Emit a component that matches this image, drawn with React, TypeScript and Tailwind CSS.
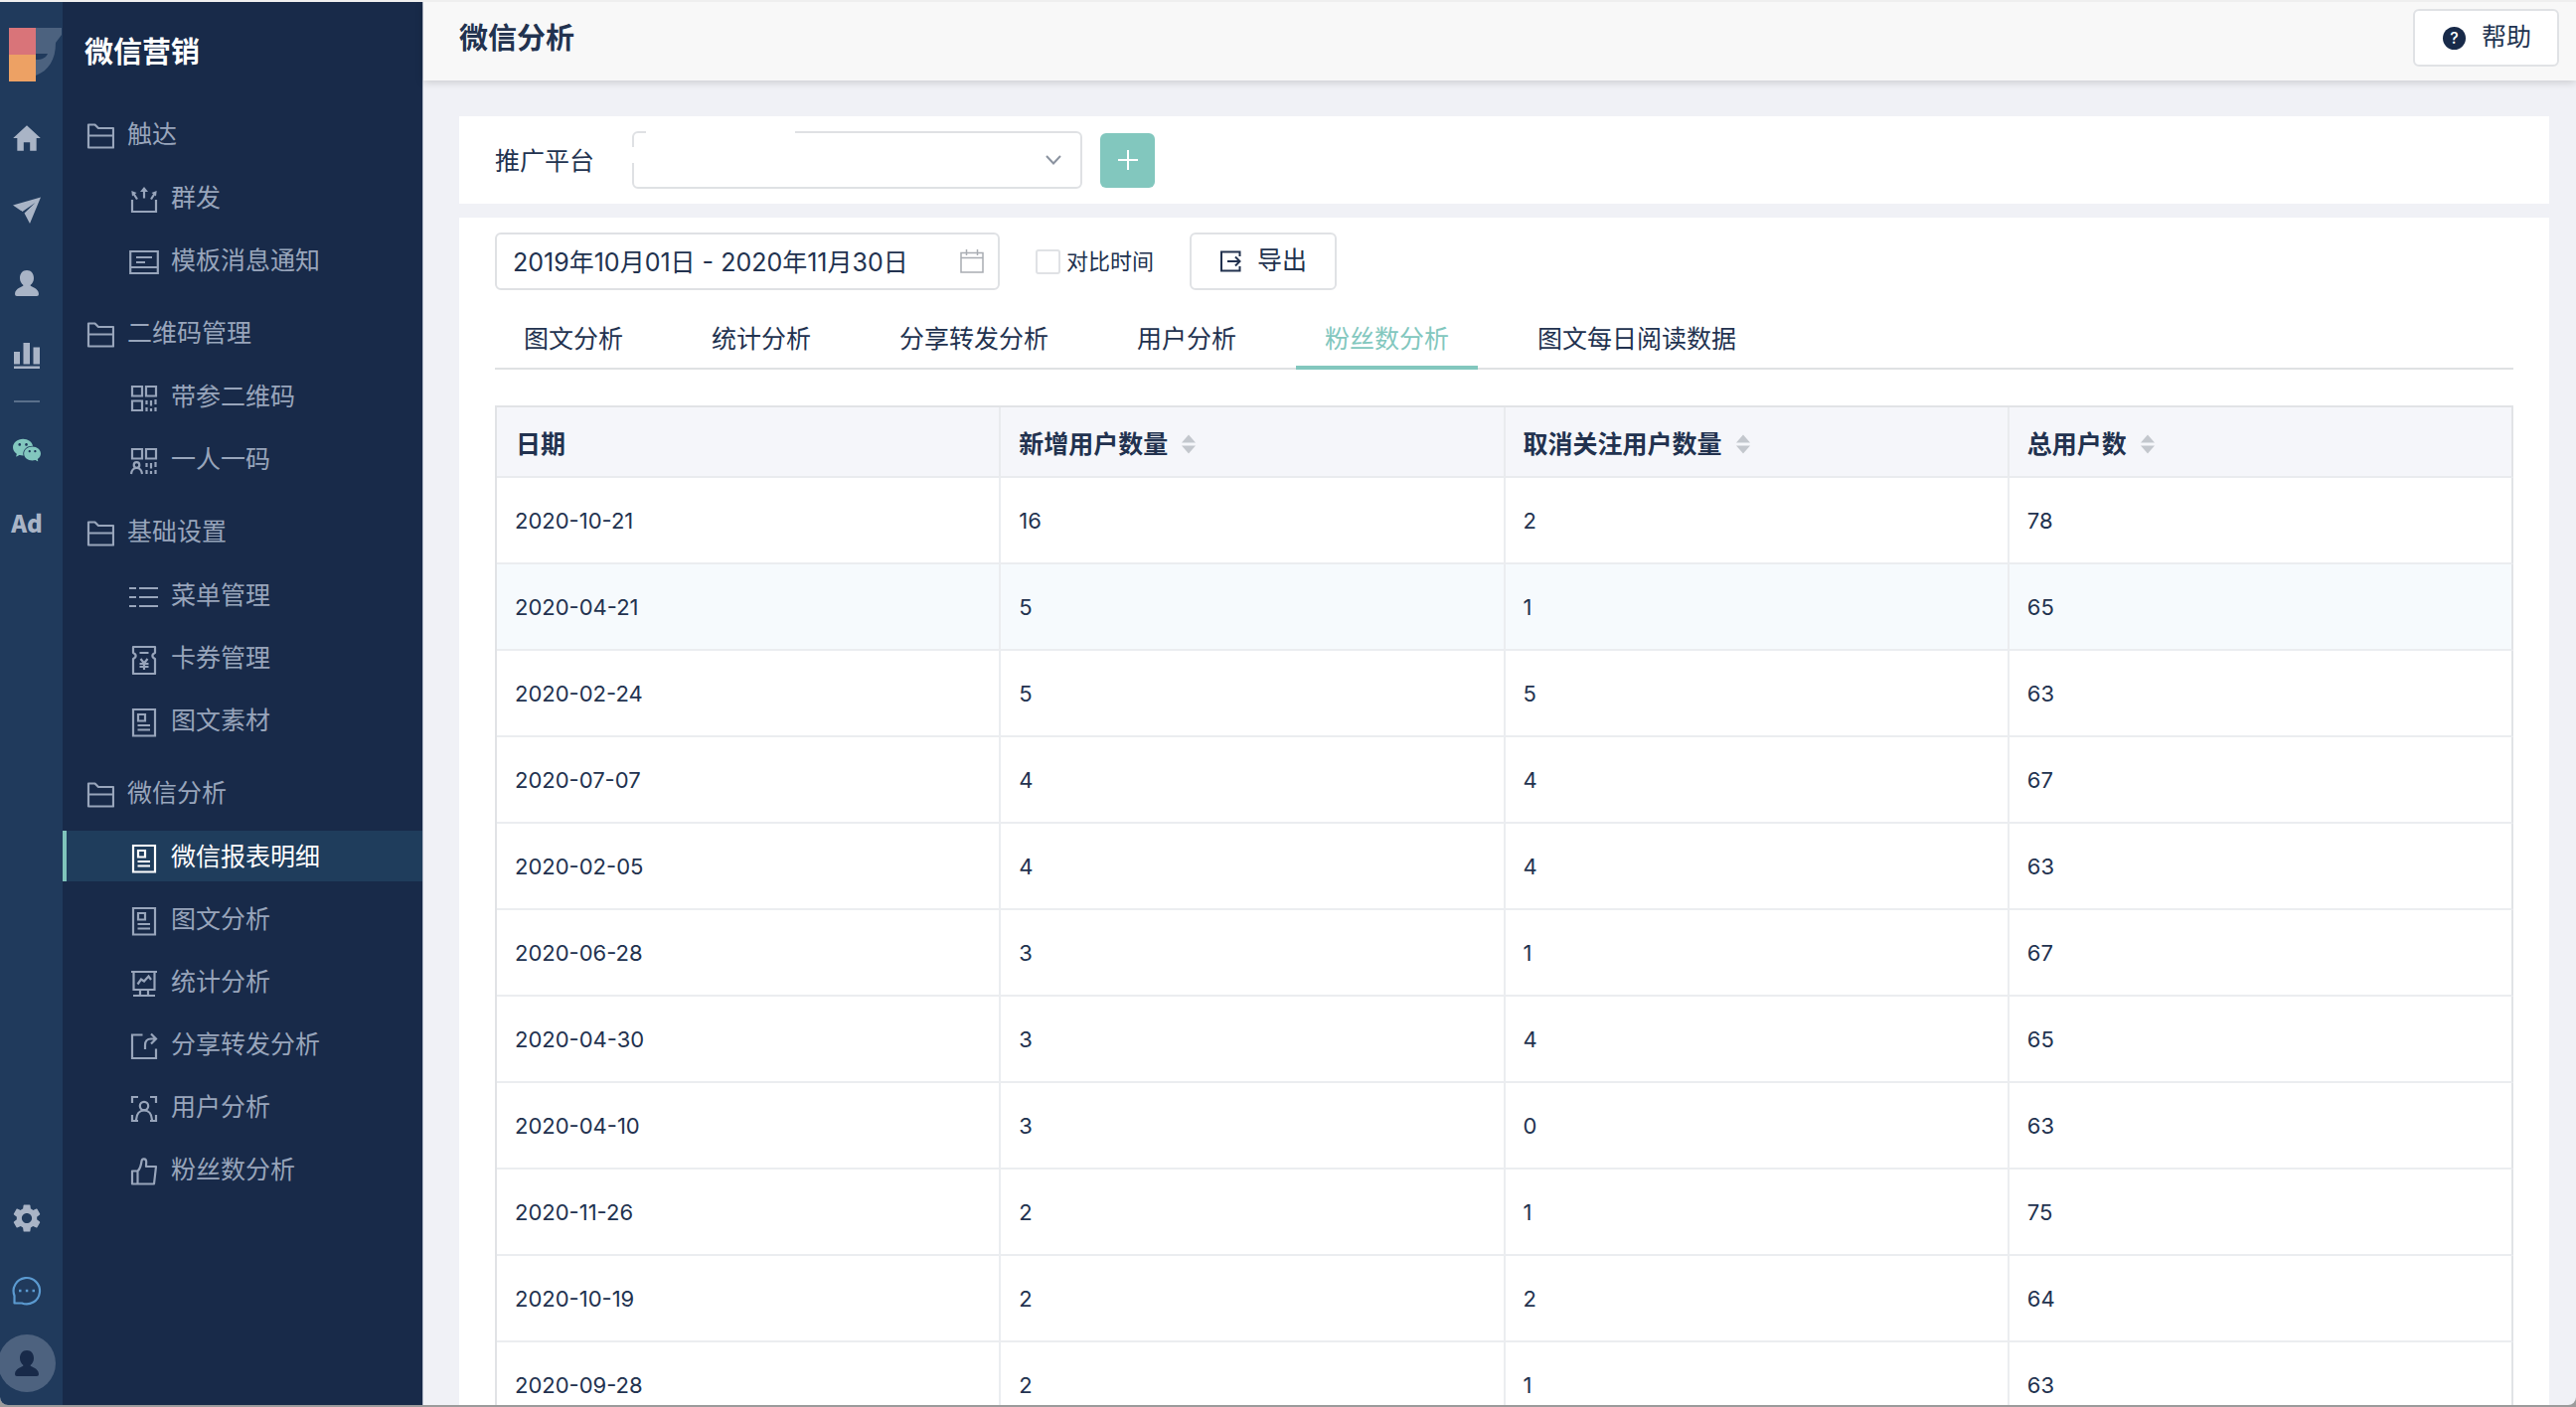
import type { ReactNode } from "react";
import { IoMdHome } from "react-icons/io";
import { MdSettings } from "react-icons/md";
import { AiFillWechat } from "react-icons/ai";

function Line({ children }: { children: ReactNode }) {
  return (
    <svg viewBox="0 0 30 30" className="mt-1 size-[30px] shrink-0" fill="none" stroke="currentColor" strokeWidth="2.200" aria-hidden="true">
      {children}
    </svg>
  );
}

const FolderIcon = () => (
  <svg viewBox="0 0 28 28" className="mt-1 size-7 shrink-0" fill="none" stroke="currentColor" strokeWidth="2.200" strokeLinejoin="round" aria-hidden="true">
    <path d="M2 25.500V2.500H8.500L12 6H27V25.500ZM2 13.500H27" />
  </svg>
);

const BroadcastIcon = () => (
  <Line>
    <path d="M3 15V27H27V15M15 13.500V5M8 14.500L4.500 9M22 14.500L25.500 9" />
    <path d="M15 2L19 7H11ZM2.300 6L7.500 8L3 11.500ZM27.700 6L22.500 8L27 11.500Z" fill="currentColor" stroke="none" />
  </Line>
);
const TemplateIcon = () => (
  <Line>
    <path d="M1.200 4H28.800V26H1.200ZM1 20H29M7 10H23M7 15H16" />
  </Line>
);
const QrDots = () => <path d="M17.500 17V21M17.500 24V28M22 17V22.500M22 25V28M26.500 16V21M26.500 24V28" />;
const QrIcon = () => (
  <Line>
    <path d="M3 3H13V12.500H3ZM17 3H27V12.500H17ZM3 17.500H13V27H3Z" />
    <QrDots />
  </Line>
);
const QrPersonIcon = () => (
  <Line>
    <path d="M3 3H13V12.500H3ZM17 3H27V12.500H17Z" />
    <circle cx="7.500" cy="19" r="2.800" />
    <path d="M2 28C2.500 24 4 22 7.500 22S12.500 24 13 28" />
    <QrDots />
  </Line>
);
const MenuIcon = () => (
  <Line>
    <path d="M0 6H7M10 6H29M0 15H7M10 15H29M0 24H7M10 24H29" />
  </Line>
);
const CouponIcon = () => (
  <Line>
    <path d="M4 2H26V8C22.500 9.500 22.500 12.500 26 14V29H4V14C7.500 12.500 7.500 9.500 4 8ZM10.500 8H19.500M11.500 14L15 18.500L18.500 14M15 18.500V25M10.500 19H19.500M10.500 22H19.500" strokeLinejoin="round" />
  </Line>
);
const ArticleIcon = () => (
  <Line>
    <path d="M4 2H26V28.500H4ZM9 7H16V13.500H9ZM8.500 18H21M8.500 22.500H21" />
  </Line>
);
const BoardIcon = () => (
  <Line>
    <path d="M2 3H28M4.500 3V21H25.500V3M11 21V27M19 21V27M4 27H26M8.500 15.500L12 10.500L15 12.500L19.500 7.500L22 11" />
  </Line>
);
const ShareIcon = () => (
  <Line>
    <path d="M13.500 3.500H3V27H27V17.500M16 18V14Q16 7.500 22 7.500H26M22 2.500L27 7.500L22 12.500" />
  </Line>
);
const ScanUserIcon = () => (
  <Line>
    <path d="M3 9V3H9M21 3H27V9M27 21V27H21M9 27H3V21" />
    <circle cx="15" cy="12" r="4.200" />
    <path d="M7 26C7.500 19.500 10.500 16.500 15 16.500S22.500 19.500 23 26" />
  </Line>
);
const ThumbIcon = () => (
  <Line>
    <path d="M3 14.500H8.500V27.500H3ZM8.500 14.500C11.500 12 12 8.500 12.500 4.500C13 1.500 17 1.800 17.200 5L17 10H27L25 27.500H8.500" strokeLinejoin="round" />
  </Line>
);

const groups = [
  {
    title: "触达",
    items: [
      { label: "群发", Icon: BroadcastIcon },
      { label: "模板消息通知", Icon: TemplateIcon },
    ],
  },
  {
    title: "二维码管理",
    items: [
      { label: "带参二维码", Icon: QrIcon },
      { label: "一人一码", Icon: QrPersonIcon },
    ],
  },
  {
    title: "基础设置",
    items: [
      { label: "菜单管理", Icon: MenuIcon },
      { label: "卡券管理", Icon: CouponIcon },
      { label: "图文素材", Icon: ArticleIcon },
    ],
  },
  {
    title: "微信分析",
    items: [
      { label: "微信报表明细", Icon: ArticleIcon, active: true },
      { label: "图文分析", Icon: ArticleIcon },
      { label: "统计分析", Icon: BoardIcon },
      { label: "分享转发分析", Icon: ShareIcon },
      { label: "用户分析", Icon: ScanUserIcon },
      { label: "粉丝数分析", Icon: ThumbIcon },
    ],
  },
];

const tabs = ["图文分析", "统计分析", "分享转发分析", "用户分析", "粉丝数分析", "图文每日阅读数据"];
const columns = ["日期", "新增用户数量", "取消关注用户数量", "总用户数"];
const highlightedDate = "2020-04-21";
const rows = [
  ["2020-10-21", 16, 2, 78],
  ["2020-04-21", 5, 1, 65],
  ["2020-02-24", 5, 5, 63],
  ["2020-07-07", 4, 4, 67],
  ["2020-02-05", 4, 4, 63],
  ["2020-06-28", 3, 1, 67],
  ["2020-04-30", 3, 4, 65],
  ["2020-04-10", 3, 0, 63],
  ["2020-11-26", 2, 1, 75],
  ["2020-10-19", 2, 2, 64],
  ["2020-09-28", 2, 1, 63],
];

const PersonShape = () => (
  <path d="M14 0C18.500 0 21 3.500 21 8C21 11 19.500 13.500 17.500 15C17.500 17 26 17.500 26 24Q26 26 24 26H4Q2 26 2 24C2 17.500 10.500 17 10.500 15C8.500 13.500 7 11 7 8C7 3.500 9.500 0 14 0Z" />
);

function Rail() {
  const link = "flex h-[73px] w-full items-center justify-center";
  return (
    <nav aria-label="主导航" className="flex w-[63px] shrink-0 flex-col bg-[#203a5c] pr-[9px] text-[#a9b4c6]">
      <a href="#" aria-label="首页" className="mt-[26px] block h-[54px] w-[63px] pl-[9px]">
        <svg viewBox="0 0 54 54" className="size-[54px]" aria-hidden="true">
          <path d="M26 0H53V7L47 15C47 32 40 43 27 48V32C34 32 37 30 39 26H26Z" fill="#4c627f" />
          <path d="M0 0H27V27H0Z" fill="#d97479" />
          <path d="M0 27H27V54H0Z" fill="#eda164" />
        </svg>
      </a>
      <div className="mt-5 flex flex-col items-center">
        <a href="#" aria-label="主页" className={link}>
          <IoMdHome className="size-[34px]" />
        </a>
        <a href="#" aria-label="发送" className={link}>
          <svg viewBox="0 0 28 28" className="size-7" fill="currentColor" aria-hidden="true">
            <path d="M0 8.500L28 0.500L8 14ZM28 0.500L17 27L11.500 16.500L22.500 6L9.500 15L8 13.500Z" />
          </svg>
        </a>
        <a href="#" aria-label="用户" className={link}>
          <svg viewBox="0 0 28 26" className="h-[26px] w-7" fill="currentColor" aria-hidden="true">
            <PersonShape />
          </svg>
        </a>
        <a href="#" aria-label="分析" className={link}>
          <svg viewBox="0 0 28 28" className="size-7" fill="currentColor" aria-hidden="true">
            <path d="M1 10H7V22.500H1ZM10.500 1H17V22.500H10.500ZM20.500 5.500H27V22.500H20.500ZM1 24.500H27V27H1Z" />
          </svg>
        </a>
      </div>
      <hr className="mx-[14px] mt-[9px] border-t-2 border-[#5a6f8b]" />
      <div className="mt-[11px] flex flex-col items-center">
        <a href="#" aria-label="微信" className={link}>
          <AiFillWechat className="size-8 text-[#82c7be]" />
        </a>
        <a href="#" className={link}>
          <span className="font-['Noto_Sans_CJK_SC',sans-serif] text-2xl font-black">Ad</span>
        </a>
      </div>
      <div className="mt-auto flex flex-col items-center pb-[13px]">
        <a href="#" aria-label="设置" className={link}>
          <MdSettings className="size-[34px]" />
        </a>
        <a href="#" aria-label="消息" className={link}>
          <svg viewBox="0 0 30 30" className="size-[30px] text-[#5b9ad0]" fill="none" stroke="currentColor" strokeWidth="2.200" aria-hidden="true">
            <path d="M2.500 27.500V20A13.200 13.200 0 1 1 10 27.500Z" strokeLinejoin="round" />
            <path d="M7 15H9.500M13.800 15H16.300M20.500 15H23" strokeWidth="2.500" />
          </svg>
        </a>
        <button type="button" aria-label="账户" className="mt-2 flex size-[58px] items-center justify-center rounded-full bg-[#4d627f] text-[#182a49]">
          <svg viewBox="0 0 28 26" className="h-[26px] w-7" fill="currentColor" aria-hidden="true">
            <PersonShape />
          </svg>
        </button>
      </div>
    </nav>
  );
}

function Sidebar() {
  return (
    <aside className="w-[363px] shrink-0 border-r border-[#b4bccb] bg-[#182a49] text-[25px] leading-8 text-[#98a5bb]">
      <h2 className="flex h-[102px] items-center pl-[22px] text-[29px] font-bold text-white">微信营销</h2>
      <div className="mt-[5px] flex flex-col gap-[22px]">
        {groups.map((g) => (
          <section key={g.title}>
            <h3 className="flex h-[51px] items-center gap-[13px] pl-6">
              <FolderIcon />
              {g.title}
            </h3>
            <ul className="mt-[13px] flex flex-col gap-3">
              {g.items.map(({ label, Icon, active }: { label: string; Icon: () => ReactNode; active?: boolean }) => (
                <li key={label}>
                  <a
                    href="#"
                    aria-current={active ? "page" : undefined}
                    className={
                      active
                        ? "flex h-[51px] items-center gap-3 border-l-4 border-[#7fc4bb] bg-[#1f3d5c] pl-[63px] text-white"
                        : "flex h-[51px] items-center gap-3 border-l-4 border-transparent pl-[63px]"
                    }
                  >
                    <Icon />
                    {label}
                  </a>
                </li>
              ))}
            </ul>
          </section>
        ))}
      </div>
    </aside>
  );
}

const SortIcon = () => (
  <svg viewBox="0 0 14 20" className="h-5 w-3.5" fill="#c3c7cd" aria-hidden="true">
    <path d="M7 0.500L14 8.500H0ZM0 11.500H14L7 19.500Z" />
  </svg>
);

function DataTable() {
  return (
    <table className="mt-9 w-full table-fixed border-separate border-spacing-0 border-t-2 border-l-2 border-[#e1e3e6] text-left">
      <thead>
        <tr className="h-[71px] bg-[#f5f6fa]">
          {columns.map((c, i) => (
            <th key={c} scope="col" className="border-r-2 border-b-2 border-[#e9ebee] pt-1 pr-0 pb-0 pl-[18px] text-[25px] leading-8 font-bold first:pl-[19px] last:border-r-[#e1e3e6]">
              {i === 0 ? (
                c
              ) : (
                <button type="button" className="flex items-center gap-3.5 font-bold">
                  {c}
                  <SortIcon />
                </button>
              )}
            </th>
          ))}
        </tr>
      </thead>
      <tbody>
        {rows.map((r) => (
          <tr key={r[0]} className={r[0] === highlightedDate ? "h-[87px] bg-[#f6fafd]" : "h-[87px] hover:bg-[#f6fafd]"}>
            {r.map((v, i) => (
              <td key={i} className="border-r-2 border-b-2 border-[#ebedf0] py-0 pr-0 pl-[18px] text-[22px] leading-8 last:border-r-[#e1e3e6]">
                {v}
              </td>
            ))}
          </tr>
        ))}
      </tbody>
    </table>
  );
}

export default function App() {
  return (
    <div className="flex h-screen flex-col overflow-hidden border-t-2 border-[#efefef] bg-[#9b9b9b] pb-0.5 font-['Inter','Noto_Sans_CJK_SC',sans-serif] text-[#22324f]">
      <div className="flex min-h-0 flex-1 overflow-hidden rounded-b-lg bg-[#f0f1f6]">
        <Rail />
        <Sidebar />
        <div className="flex min-w-0 flex-1 flex-col">
          <header className="z-10 flex h-[79px] shrink-0 items-start justify-between bg-[#f8f8f8] pt-[7px] pr-[17px] pl-9 shadow-[0_2px_8px_rgba(0,0,0,0.16)]">
            <h1 className="text-[29px] leading-[60px] font-bold">微信分析</h1>
            <button type="button" className="flex h-[58px] items-center gap-4 rounded-md border-2 border-[#e0e2e5] bg-white pr-[26px] pl-7 text-[25px]">
              <span className="flex size-[23px] items-center justify-center rounded-full bg-[#182a49] text-base leading-none font-medium text-white">?</span>
              帮助
            </button>
          </header>
          <main className="flex min-h-0 flex-1 flex-col gap-3.5 pt-9 pr-[27px] pl-9">
            <section className="flex shrink-0 items-center bg-white px-9 py-[15px]">
              <label htmlFor="platform" className="w-[138px] pt-1 text-[25px]">
                推广平台
              </label>
              <div className="relative">
                <select id="platform" className="block h-[58px] w-[453px] appearance-none rounded-md border-2 border-[#dfe1e4] bg-white px-4 text-[25px]">
                  <option value=""></option>
                </select>
                <span className="pointer-events-none absolute top-0 left-3.5 h-10 w-[150px] bg-white" />
                <span className="pointer-events-none absolute top-4 left-0 h-4 w-5 bg-white" />
                <svg viewBox="0 0 16 10" className="pointer-events-none absolute top-6 right-[21px] h-2.5 w-4" fill="none" stroke="#8b93a0" strokeWidth="2" aria-hidden="true">
                  <path d="M1 1L8 8.500L15 1" />
                </svg>
              </div>
              <button type="button" aria-label="添加平台" className="ml-[18px] flex size-[55px] items-center justify-center rounded-md bg-[#82c7be]">
                <svg viewBox="0 0 20 20" className="size-5" stroke="#fff" strokeWidth="2" aria-hidden="true">
                  <path d="M10 0V20M0 10H20" />
                </svg>
              </button>
            </section>

            <section className="flex-1 overflow-hidden bg-white px-9 pt-[15px]">
              <div className="flex items-center">
                <div className="relative">
                  <input
                    type="text"
                    readOnly
                    aria-label="日期范围"
                    value="2019年10月01日 - 2020年11月30日"
                    className="block h-[58px] w-[508px] rounded-md border-2 border-[#dfe1e4] bg-white pr-12 pb-0.5 pl-4 text-[25px]"
                  />
                  <svg viewBox="0 0 24 24" className="pointer-events-none absolute top-[17px] right-4 size-6" fill="none" stroke="#a9adb3" strokeWidth="1.500" aria-hidden="true">
                    <path d="M1 3.500H23V23H1ZM1 8.500H23M6.500 0V6M17.500 0V6" />
                  </svg>
                </div>
                <label className="ml-9 flex items-center gap-1.5 text-[22px]">
                  <input type="checkbox" className="size-[25px] appearance-none rounded-[3px] border-2 border-[#e0e2e5] bg-white checked:bg-[#82c7be]" />
                  对比时间
                </label>
                <button type="button" className="ml-9 flex h-[58px] items-center gap-4 rounded-md border-2 border-[#e0e2e5] bg-white pr-7 pl-7 text-[25px]">
                  <svg viewBox="0 0 22 22" className="size-[22px]" fill="none" stroke="currentColor" strokeWidth="2" aria-hidden="true">
                    <path d="M20.500 6V1.500H2V20.500H20.500V16M8 11H20M16 6.500L20.500 11L16 15.500" />
                  </svg>
                  导出
                </button>
              </div>

              <div role="tablist" className="mt-[17px] flex gap-[31px] border-b-2 border-[#dfe1e3]">
                {tabs.map((t, i) => (
                  <button
                    key={t}
                    type="button"
                    role="tab"
                    aria-selected={i === 4}
                    className={
                      i === 4
                        ? "-mb-0.5 h-[63px] border-b-4 border-[#82c7be] px-[29px] pt-1 text-[25px] leading-8 text-[#82c7be]"
                        : "-mb-0.5 h-[63px] border-b-4 border-transparent px-[29px] pt-1 text-[25px] leading-8"
                    }
                  >
                    {t}
                  </button>
                ))}
              </div>

              <DataTable />
            </section>
          </main>
        </div>
      </div>
    </div>
  );
}
